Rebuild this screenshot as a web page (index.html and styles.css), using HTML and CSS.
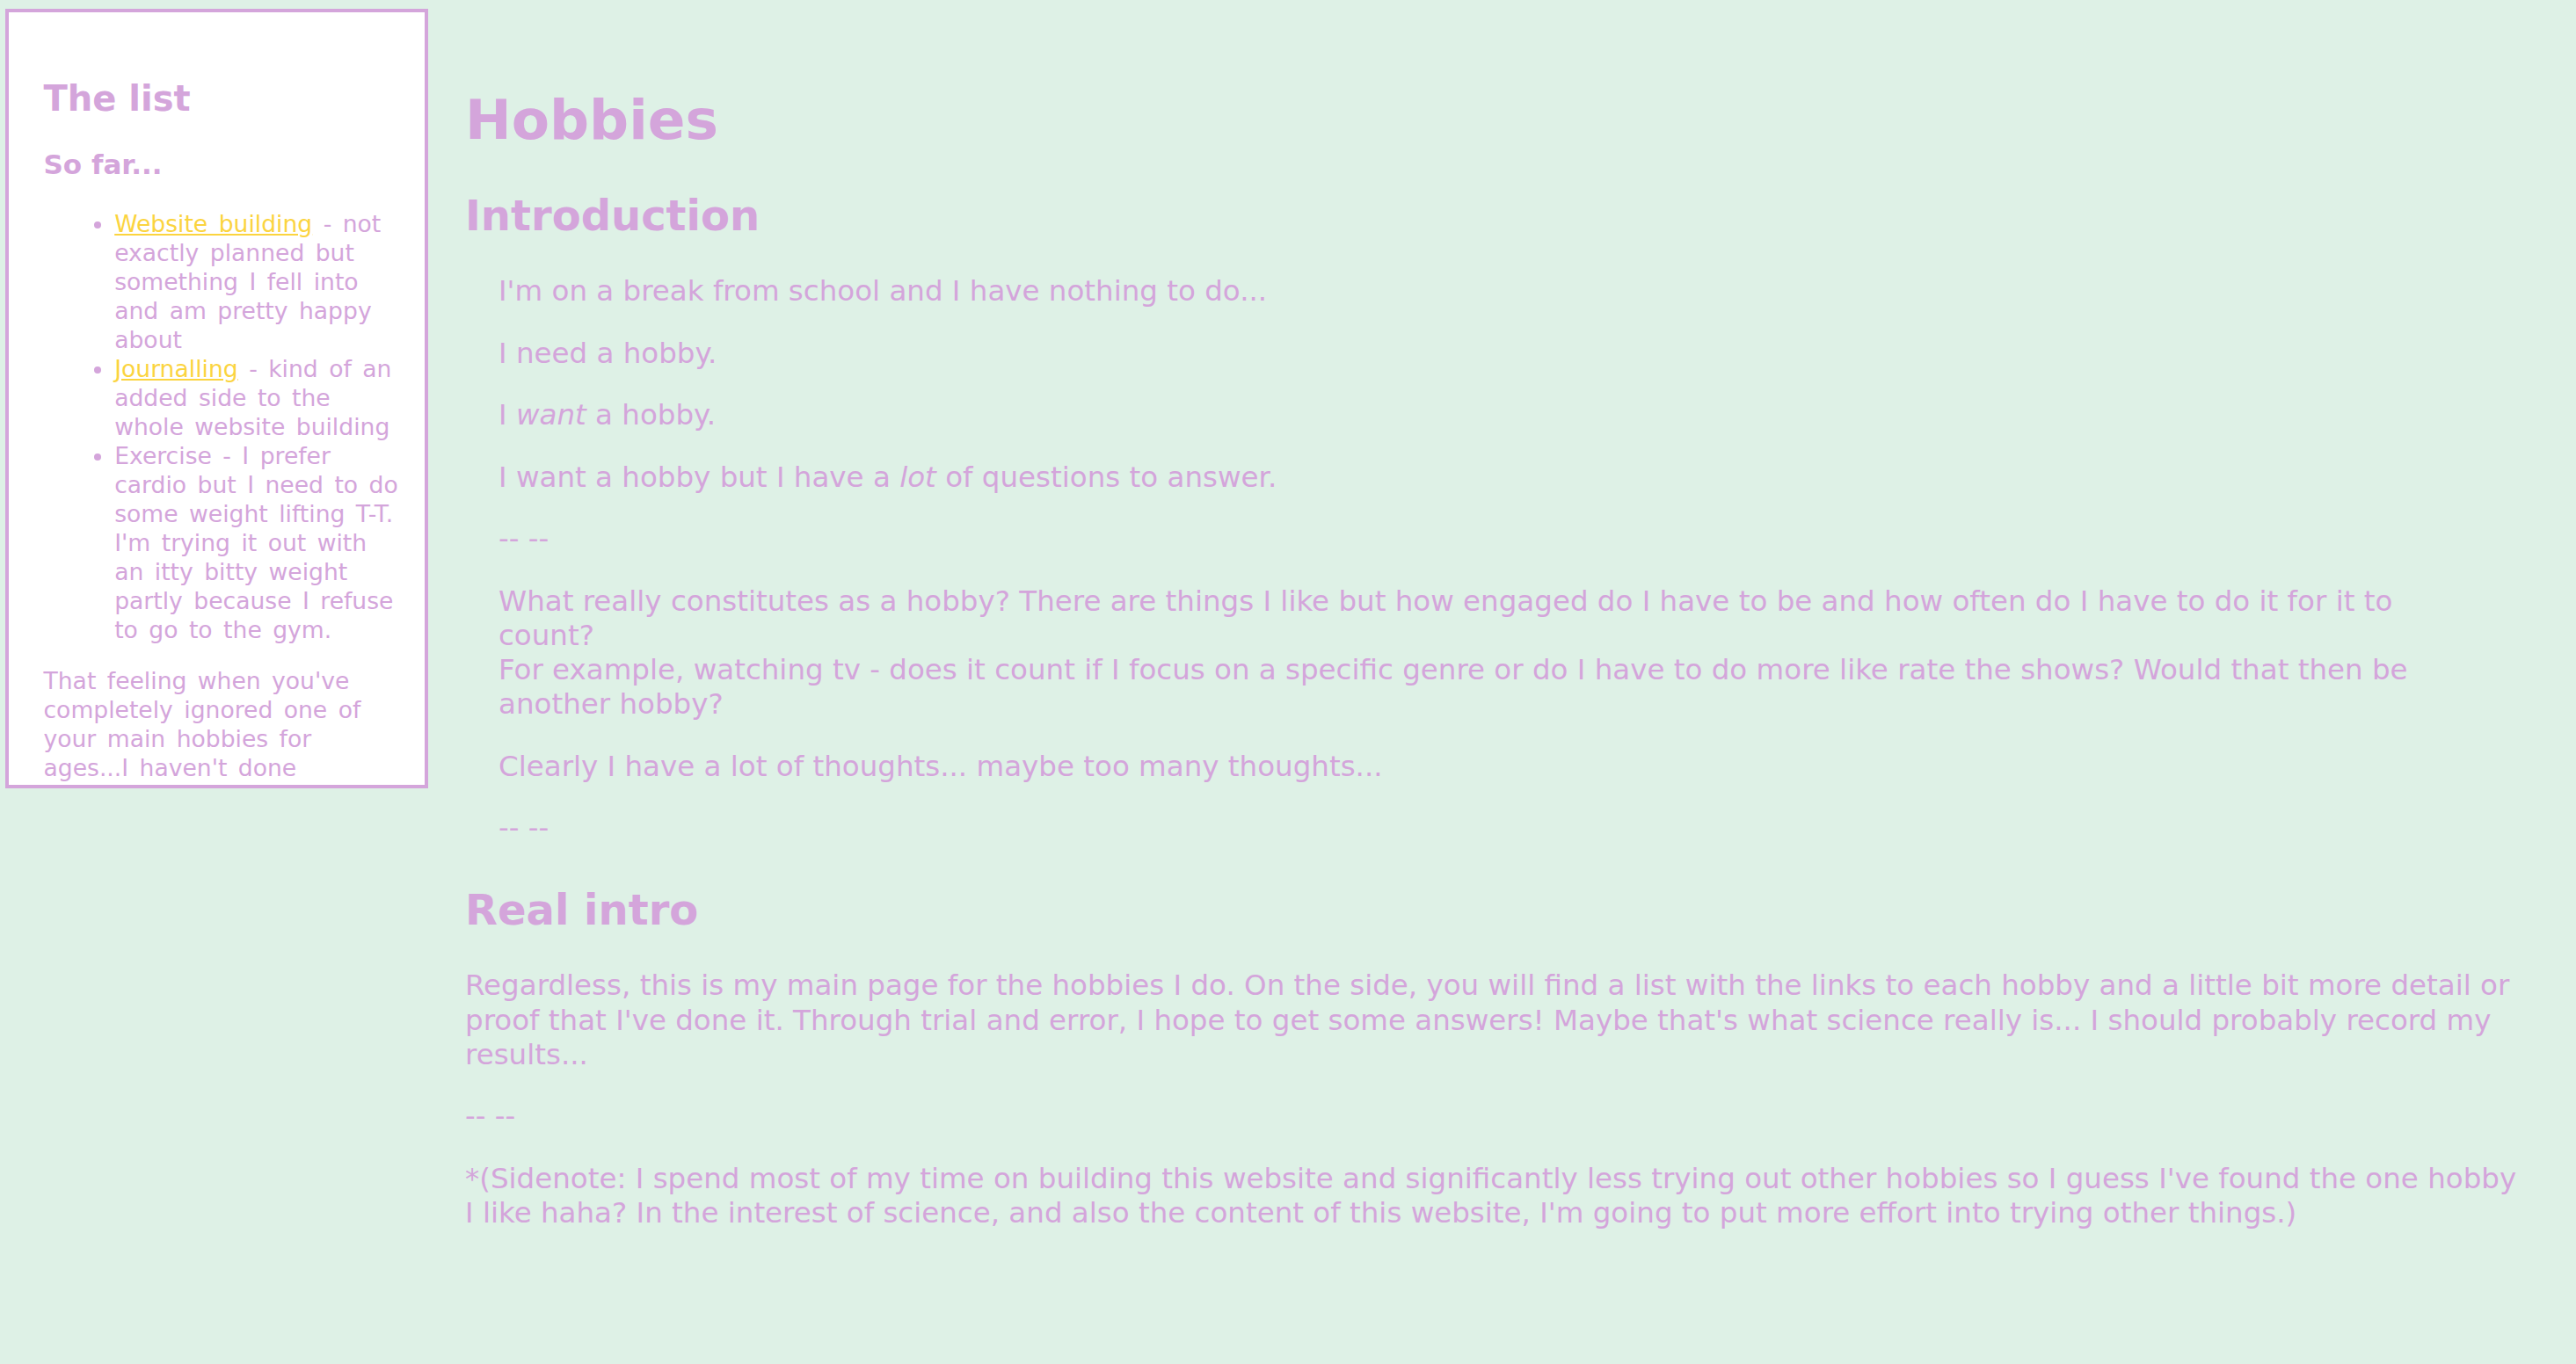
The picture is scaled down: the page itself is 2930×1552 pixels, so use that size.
FILE: index.html
```html
<!DOCTYPE html>
<html lang="en">
<head>
<meta charset="utf-8">
<title>Hobbies</title>
<link rel="stylesheet" href="styles.css">
</head>
<body>
<aside class="sidebar">
  <h2 class="side-title">The list</h2>
  <h3 class="side-sub">So far...</h3>
  <ul class="side-list">
    <li><a href="#">Website building</a> - not exactly planned but something I fell into and am pretty happy about</li>
    <li><a href="#">Journalling</a> - kind of an added side to the whole website building</li>
    <li>Exercise - I prefer cardio but I need to do some weight lifting T-T. I'm trying it out with an itty bitty weight partly because I refuse to go to the gym.</li>
  </ul>
  <p class="side-note">That feeling when you've completely ignored one of your main hobbies for ages...I haven't done anything with it in so long.</p>
</aside>
<main class="main">
  <h1 class="page-title">Hobbies</h1>
  <h2 class="section-title">Introduction</h2>
  <div class="intro">
    <p>I'm on a break from school and I have nothing to do...</p>
    <p>I need a hobby.</p>
    <p>I <em>want</em> a hobby.</p>
    <p>I want a hobby but I have a <em>lot</em> of questions to answer.</p>
    <p>-- --</p>
    <p>What really constitutes as a hobby? There are things I like but how engaged do I have to be and how often do I have to do it for it to count?<br>For example, watching tv - does it count if I focus on a specific genre or do I have to do more like rate the shows? Would that then be another hobby?</p>
    <p>Clearly I have a lot of thoughts... maybe too many thoughts...</p>
    <p>-- --</p>
  </div>
  <h2 class="section-title real">Real intro</h2>
  <p>Regardless, this is my main page for the hobbies I do. On the side, you will find a list with the links to each hobby and a little bit more detail or proof that I've done it. Through trial and error, I hope to get some answers! Maybe that's what science really is... I should probably record my results...</p>
  <p>-- --</p>
  <p>*(Sidenote: I spend most of my time on building this website and significantly less trying out other hobbies so I guess I've found the one hobby I like haha? In the interest of science, and also the content of this website, I'm going to put more effort into trying other things.)</p>
</main>
</body>
</html>
```

FILE: styles.css
```css
html {
  background: #def1e6;
}

body {
  margin: 0;
  min-height: 100vh;
  box-sizing: border-box;
  padding: 10px 50px 0 6px;
  display: flex;
  align-items: flex-start;
  background: #def1e6;
  color: #d4a5db;
  font-family: "DejaVu Sans", Verdana, sans-serif;
}

.sidebar {
  flex: 0 0 481px;
  height: 887px;
  box-sizing: border-box;
  border: 4.5px solid #d4a5db;
  background: #ffffff;
  padding: 0 23.5px 0 39.5px;
  overflow: hidden;
  font-size: 26.6px;
  line-height: 33px;
}

.side-title {
  font-size: 40px;
  line-height: 50px;
  margin: 73px 0 32.4px;
}

.side-sub {
  font-size: 31px;
  line-height: 36px;
  margin: 0 0 32.4px;
}

.side-list {
  margin: 0 0 25px;
  padding-left: 80.7px;
  word-spacing: 4px;
}

.side-list a {
  color: #fbd43f;
}

.side-note {
  margin: 0;
  word-spacing: 4px;
}

.main {
  flex: 1 1 auto;
  min-width: 0;
  margin-left: 42px;
  font-size: 32.5px;
  line-height: 39.2px;
}

.page-title {
  font-size: 63px;
  line-height: 75px;
  margin: 89px 0 42px;
}

.section-title {
  font-size: 48px;
  line-height: 58px;
  margin: 0 0 38px;
}

.section-title.real {
  margin-top: 44px;
}

.main p {
  margin: 0 0 31.3px;
}

.intro {
  margin: 0 70px 0 38px;
}
```
